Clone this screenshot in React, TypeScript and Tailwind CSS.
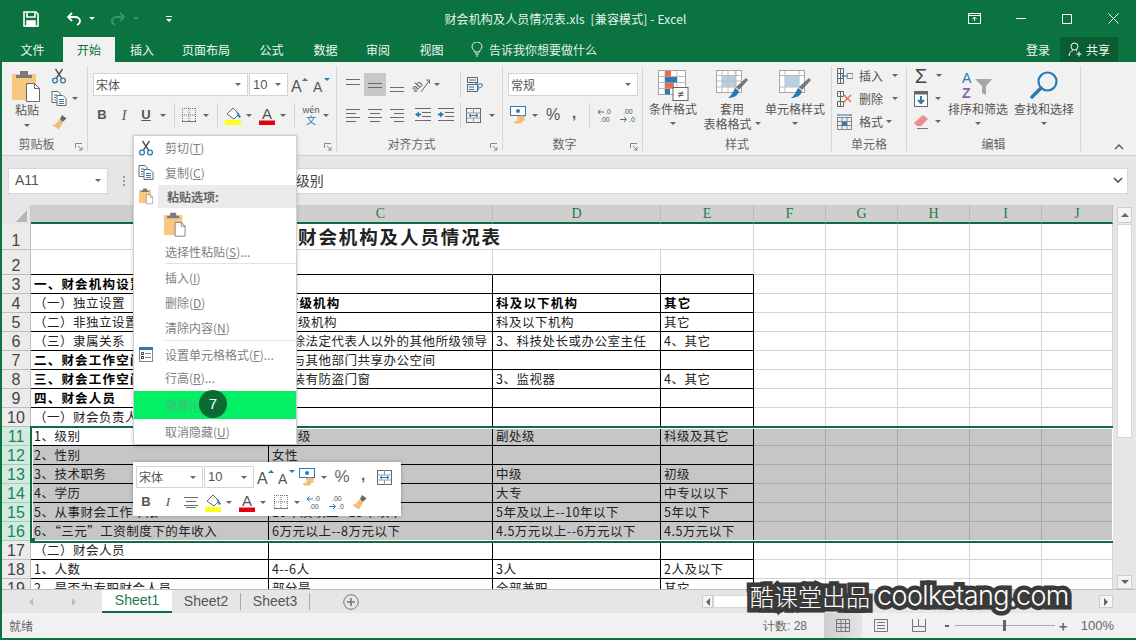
import React from "react";

const UI = "font-['Noto_Sans_CJK_SC','Noto_Sans',sans-serif]";
const Caret = ({ c = "border-t-[#666]" }: { c?: string }) => (
  <span className={`inline-block w-0 h-0 border-x-[3px] border-x-transparent border-t-[3px] ${c}`} />
);
const Slot = ({ c, children }: { c: string; children?: React.ReactNode }) => (
  <div className={`flex items-center justify-center shrink-0 ${c}`}>{children}</div>
);
const Sep = ({ c = "h-[24px]" }: { c?: string }) => <div className={`w-px bg-[#d2d2d2] ${c}`} />;

const G = "#666";
const B = "#2a7ab5";

const Save = () => (
  <svg width="16" height="16" viewBox="0 0 16 16" fill="none" stroke="#fff" strokeWidth="1.6">
    <path d="M1 1h12l2 2v12H1z" />
    <path d="M4 1v5h8V1" />
    <rect x="4" y="10" width="8" height="5" fill="#fff" />
  </svg>
);
const Undo = ({ c = "#fff" }: { c?: string }) => (
  <svg width="16" height="14" viewBox="0 0 16 14" fill="none" stroke={c} strokeWidth="1.8">
    <path d="M6 1L2 5l4 4" />
    <path d="M2 5h7c3 0 5 2 5 4s-1 3-3 4" />
  </svg>
);
const Redo = ({ c }: { c: string }) => (
  <svg width="16" height="14" viewBox="0 0 16 14" fill="none" stroke={c} strokeWidth="1.8">
    <path d="M10 1l4 4-4 4" />
    <path d="M14 5H7C4 5 2 7 2 9s1 3 3 4" />
  </svg>
);
const PasteIcon = ({ s = 30 }: { s?: number }) => (
  <svg width={s} height={s * 1.07} viewBox="0 0 30 32">
    <rect x="0" y="4" width="24" height="26" fill="#f8c880" />
    <path d="M8 5V1h8v4h4v3H4V5z" fill="#7b7b7b" />
    <path d="M14.5 13.5h8l5 5v13h-13z" fill="#fff" stroke="#666" />
    <path d="M22.5 13.5v5h5" fill="none" stroke="#666" />
  </svg>
);
const Cut = () => (
  <svg width="16" height="16" viewBox="0 0 16 16" fill="none">
    <path d="M4.5 1l6 9M11.5 1l-6 9" stroke="#555" strokeWidth="1.4" />
    <circle cx="4" cy="12.5" r="2.4" stroke={B} strokeWidth="1.3" />
    <circle cx="12" cy="12.5" r="2.4" stroke={B} strokeWidth="1.3" />
  </svg>
);
const Copy = () => (
  <svg width="16" height="15" viewBox="0 0 16 15" fill="none">
    <path d="M1 .5h6l2 2v9H1z" fill="#fff" stroke="#666" />
    <path d="M6 4.500h6l3 3v7H6z" fill="#fff" stroke="#666" />
    <path d="M3 4h3M3 6.500h2M3 9h2M8 8.500h5M8 10.500h5M8 12.500h5" stroke={B} />
  </svg>
);
const Painter = () => (
  <svg width="17" height="16" viewBox="0 0 17 16">
    <path d="M11 1l4.500 3.500-4 3.500L9 5z" fill={G} />
    <path d="M8.500 5l3.500 3.500-4 7L1 11c3 0 6-3 7.500-6z" fill="#f4bd73" />
  </svg>
);
const AUp = ({ big, down }: { big?: boolean; down?: boolean }) => (
  <svg width="20" height="20" viewBox="0 0 20 20" className="overflow-visible">
    <text x="1" y="17" fontFamily="Liberation Sans" fontSize={big ? 16 : 14} fill="#555">A</text>
    <path d={down ? "M12 3h6l-3 3z" : "M12 6h6l-3-3z"} fill={B} />
  </svg>
);
const Bars = ({ ys, x }: { ys: number[]; x: [number, number][] }) => (
  <svg width="16" height="16" viewBox="0 0 16 16" stroke="#6a6a6a">
    {ys.map((y, i) => (
      <path key={i} d={`M${x[i % x.length][0]} ${y}.5H${x[i % x.length][1]}`} />
    ))}
  </svg>
);
const Borders = () => (
  <svg width="14" height="14" viewBox="0 0 14 14" stroke="#777" strokeDasharray="1 1">
    <path d="M.5 0v14M7 0v14M13.500 0v14M0 .5h14M0 7h14" />
    <path d="M0 13.500h14" strokeDasharray="none" />
  </svg>
);
const FillC = () => (
  <svg width="18" height="19" viewBox="0 0 18 19">
    <path d="M3 8l6-6 6 6-5 5z" fill="#fff" stroke="#666" />
    <path d="M12 5l3 3 2 3-2 1z" fill={B} />
    <rect x="1" y="14" width="16" height="5" fill="#ffff1e" />
  </svg>
);
const FontC = () => (
  <svg width="17" height="19" viewBox="0 0 17 19" className="overflow-visible">
    <text x="3" y="13" fontFamily="Liberation Sans" fontSize="15" fill="#555">A</text>
    <rect x="0" y="14.500" width="16" height="4.500" fill="#e60012" />
  </svg>
);
const Indent = ({ rev }: { rev?: boolean }) => (
  <svg width="17" height="14" viewBox="0 0 17 14">
    <path d="M1 .5h16M8 4.500h9M8 8.500h9M1 12.500h16" stroke="#6a6a6a" />
    <path d={rev ? "M1 6.500l4-3v2h2v2H5v2z" : "M7 6.500l-4-3v2H1v2h2v2z"} fill={B} />
  </svg>
);
const Merge = () => (
  <svg width="16" height="15" viewBox="0 0 16 15" fill="none">
    <rect x=".5" y=".5" width="14" height="14" stroke="#666" />
    <path d="M.5 5h14M.5 10h14M7.500 0v5M7.500 10v5" stroke="#999" />
    <path d="M3 7.500h9M3 7.500l2-1.500M3 7.500l2 1.500M12 7.500l-2-1.500M12 7.500l-2 1.500" stroke={B} />
  </svg>
);
const Wrap = () => (
  <svg width="17" height="15" viewBox="0 0 17 15" fill="none">
    <rect x=".5" y=".5" width="10" height="5" stroke="#666" />
    <rect x=".5" y="7.500" width="10" height="7" stroke="#666" />
    <path d="M2 3h7M2 10h5M2 12.500h5" stroke={B} />
    <path d="M8 7h7c1 3-1 4-4 4M12 9l-2 2 2 2" stroke={B} />
  </svg>
);
const Orient = () => (
  <svg width="18" height="16" viewBox="0 0 18 16" className="overflow-visible">
    <text x="0" y="14" fontFamily="Liberation Sans" fontSize="10" fill="#555" transform="rotate(-45 3 12)">ab</text>
    <path d="M8 15L16 4M13 3h3.500v3.500" stroke="#666" fill="none" />
  </svg>
);
const Currency = () => (
  <svg width="17" height="18" viewBox="0 0 17 18">
    <rect x=".5" y=".5" width="15" height="9" fill="#fff" stroke={B} />
    <circle cx="8" cy="5" r="2" fill={B} />
    <ellipse cx="11" cy="11" rx="4" ry="1.500" fill="#f4bd73" />
    <ellipse cx="11" cy="13.500" rx="4" ry="1.500" fill="#f4bd73" />
    <ellipse cx="8" cy="16" rx="4" ry="1.500" fill="#f4bd73" />
  </svg>
);
const Dec = ({ inc }: { inc?: boolean }) => (
  <svg width="18" height="15" viewBox="0 0 18 15" className="overflow-visible">
    <text x={inc ? 4 : 9} y="6" fontFamily="Liberation Sans" fontSize="7" fill="#555">{inc ? ".00" : ".0"}</text>
    <text x={inc ? 10 : 4} y="14" fontFamily="Liberation Sans" fontSize="7" fill="#555">{inc ? ".0" : ".00"}</text>
    {inc ? (
      <path d="M1 11.500h6M5 9l2.500 2.500L5 14" stroke={B} fill="none" />
    ) : (
      <path d="M8 4H2M4.500 1.500L2 4l2.500 2.500" stroke={B} fill="none" />
    )}
  </svg>
);
const CondF = () => (
  <svg width="31" height="31" viewBox="0 0 31 31" className="overflow-visible">
    <rect x=".5" y=".5" width="27" height="24" fill="#fff" stroke="#a6a6a6" />
    <path d="M7 .5v24M19 .5v24M.5 6.500h27M.5 12.500h27M.5 18.500h27" stroke="#bbb" />
    <rect x="7" y="1" width="6" height="5.500" fill="#ef6a4a" />
    <rect x="7" y="7" width="12" height="5.500" fill="#2a7ab5" />
    <rect x="7" y="13" width="9" height="5.500" fill="#ef6a4a" />
    <rect x="7" y="19" width="5" height="5.500" fill="#2a7ab5" />
    <rect x="15" y="17.500" width="15" height="13" fill="#fff" stroke="#666" />
    <text x="22.500" y="28" textAnchor="middle" fontSize="11" fontFamily="Liberation Sans" fill="#444">≠</text>
  </svg>
);
const TableF = ({ wide }: { wide?: boolean }) => (
  <svg width="32" height="30" viewBox="0 0 32 30">
    <rect x=".5" y=".5" width="25" height="22" fill="#fff" stroke="#a6a6a6" />
    <path d="M.5 5.500h25M.5 17h25M6 .5v22M20 .5v22" stroke="#bbb" />
    <rect x="6" y="6" width="14" height="11" fill="#b7cfe3" />
    {!wide && <path d="M12 .5v22M19 .5v22M.5 11h25" stroke="#bbb" />}
    <path d="M30 8l2 2-9 10-3-3z" fill="#777" />
    <path d="M19 18l4 3c-1 5-6 7-11 7 3-2 5-6 7-10z" fill={B} />
  </svg>
);
const InsCell = () => (
  <svg width="16" height="16" viewBox="0 0 16 16" fill="none" stroke="#666">
    <path d="M.5 .5h6v5h-6zM.5 10.500h6v5h-6zM.5 5.500h6v5h-6zM3.500 .5v15" />
    <path d="M10 5.500h6v5h-6z" stroke="#888" />
    <path d="M11 8H5M7 6L5 8l2 2" stroke={B} />
  </svg>
);
const DelCell = () => (
  <svg width="16" height="16" viewBox="0 0 16 16" fill="none" stroke="#666">
    <path d="M.5 .5h6v5h-6zM.5 10.500h6v5h-6zM3.500 .5v15" />
    <path d="M7 4l7 7M14 4l-7 7" stroke="#ef6a4a" strokeWidth="1.4" />
  </svg>
);
const FmtCell = () => (
  <svg width="16" height="16" viewBox="0 0 16 16" fill="none" stroke="#888">
    <rect x=".5" y="3.500" width="14" height="12" />
    <path d="M.5 7.500h14M.5 11.500h14M5 3.500v12M10 3.500v12" />
    <rect x="5" y="8" width="5" height="4" fill={B} stroke="none" />
    <path d="M1 1h13M1 0v2M14 0v2" stroke={B} />
  </svg>
);
const FillDn = () => (
  <svg width="15" height="16" viewBox="0 0 15 16">
    <rect x=".5" y=".5" width="13" height="15" fill="#fff" stroke="#666" />
    <rect x="0" y="0" width="14" height="3.500" fill="#666" />
    <path d="M7 5v7M4 9l3 3 3-3" stroke={B} strokeWidth="2" fill="none" />
  </svg>
);
const Eraser = () => (
  <svg width="15" height="14" viewBox="0 0 15 14">
    <path d="M9 0l5 4-7 7H3L0 8z" fill="#f08a92" />
    <path d="M3 13.500h11" stroke="#777" />
  </svg>
);
const Sort = () => (
  <svg width="32" height="28" viewBox="0 0 32 28" className="overflow-visible">
    <text x="0" y="12" fontFamily="Liberation Sans" fontSize="14" fill={B}>A</text>
    <text x="0" y="27" fontFamily="Liberation Sans" fontSize="14" fontWeight="bold" fill="#8e5fae">Z</text>
    <path d="M13 8h17l-6 7v9l-4-2v-7z" fill="#a6a6a6" />
  </svg>
);
const Search = () => (
  <svg width="28" height="28" viewBox="0 0 28 28" fill="none">
    <circle cx="17.500" cy="10.500" r="9" stroke={B} strokeWidth="2.200" />
    <path d="M11 17L2 26" stroke={B} strokeWidth="3.500" strokeLinecap="round" />
  </svg>
);
const FmtMenu = () => (
  <svg width="15" height="15" viewBox="0 0 15 15" fill="none">
    <rect x=".5" y=".5" width="13" height="14" stroke="#888" />
    <rect x="0" y="0" width="14" height="3" fill={B} />
    <path d="M6 6.500h6M6 10.500h6" stroke="#888" />
    <rect x="2.500" y="5.500" width="2" height="2" stroke="#555" />
    <rect x="2.500" y="9.500" width="2" height="2" stroke="#555" />
  </svg>
);

const Launcher = () => (
  <svg width="8" height="8" viewBox="0 0 8 8" fill="none" stroke="#888">
    <path d="M.5 5V.5H7" />
    <path d="M3 3l4 4M7 4v3H4" />
  </svg>
);

const Group = ({ c, label, launcher, children }: { c: string; label: string; launcher?: boolean; children: React.ReactNode }) => (
  <div className={`shrink-0 flex flex-col border-r border-[#d6d6d6] ${c}`}>
    <div className="h-[72px]">{children}</div>
    <div className="h-[14px] flex items-center">
      <span className="flex-1 text-center text-[12px] leading-[14px] text-[#666]">{label}</span>
      {launcher && (
        <span className="w-[16px] flex justify-center pt-[5px]">
          <Launcher />
        </span>
      )}
    </div>
  </div>
);

const Big = ({ c, icon, lines }: { c: string; icon: React.ReactNode; lines: string[] }) => (
  <div className={`flex flex-col items-center shrink-0 ${c}`}>
    <div className="h-[35px] flex items-center justify-center pt-[3px]">{icon}</div>
    <div className="h-[15px] text-[12px] leading-[15px] text-[#555] whitespace-nowrap">{lines[0]}</div>
    <div className="h-[15px] text-[12px] leading-[15px] text-[#555] whitespace-nowrap flex items-center gap-[3px]">
      {lines[1]}
      <Caret />
    </div>
  </div>
);

const SelectBox = ({ c, text, mono }: { c: string; text: string; mono?: boolean }) => (
  <div className={`flex items-center justify-between bg-white border border-[#d4d4d4] shrink-0 h-[23px] pl-[2px] pr-[6px] text-[12px] text-[#555] ${c}`}>
    <span className={mono ? "text-[13px] font-['Liberation_Sans'] pl-[1px]" : ""}>{text}</span>
    <Caret />
  </div>
);

const TabItem = ({ c, t, active }: { c: string; t: string; active?: boolean }) => (
  <div className={`flex items-center justify-center text-[12px] shrink-0 ${c} ${active ? "bg-[#f1f1f1] text-[#0a7340]" : "text-[#eef7f2]"}`}>{t}</div>
);

const MenuItem = ({ c = "h-[25px] shrink-0", icon, children }: { c?: string; icon?: React.ReactNode; children?: React.ReactNode }) => (
  <div className={`flex items-center ${c}`}>
    <div className="w-[24px] flex justify-center shrink-0">{icon}</div>
    <div className="pl-[7px] text-[12px] text-[#7f7f7f] whitespace-nowrap">{children}</div>
  </div>
);
const MenuSep = () => <div className="h-px bg-[#e2e2e2] ml-[31px] shrink-0" />;

type R = { n: number; h: string; a?: string; c?: string; d?: string; e?: string; ab?: boolean; cb?: boolean };
const rows: R[] = [
  { n: 2, h: "h-[25px]" },
  { n: 3, h: "h-[19px]", a: "一、财会机构设置", ab: true },
  { n: 4, h: "h-[19px]", a: "（一）独立设置", c: "地市级机构", d: "科及以下机构", e: "其它", cb: true },
  { n: 5, h: "h-[19px]", a: "（二）非独立设置", c: "地市级机构", d: "科及以下机构", e: "其它" },
  { n: 6, h: "h-[19px]", a: "（三）隶属关系", c: "1、除法定代表人以外的其他所级领导", d: "3、科技处长或办公室主任", e: "4、其它" },
  { n: 7, h: "h-[19px]", a: "二、财会工作空间", ab: true, c: "1、与其他部门共享办公空间" },
  { n: 8, h: "h-[19px]", a: "三、财会工作空间", ab: true, c: "1、装有防盗门窗", d: "3、监视器", e: "4、其它" },
  { n: 9, h: "h-[19px]", a: "四、财会人员", ab: true },
  { n: 10, h: "h-[19px]", a: "（一）财会负责人" },
  { n: 11, h: "h-[19px]", a: "1、级别", c: "正处级", d: "副处级", e: "科级及其它" },
  { n: 12, h: "h-[19px]", a: "2、性别", c: "女性" },
  { n: 13, h: "h-[19px]", a: "3、技术职务", c: "高级", d: "中级", e: "初级" },
  { n: 14, h: "h-[19px]", a: "4、学历", c: "本科及以上", d: "大专", e: "中专以以下" },
  { n: 15, h: "h-[19px]", a: "5、从事财会工作年限", c: "10年及以上--15年以下", d: "5年及以上--10年以下", e: "5年以下" },
  { n: 16, h: "h-[19px]", a: "6、“三元”工资制度下的年收入", c: "6万元以上--8万元以下", d: "4.5万元以上--6万元以下", e: "4.5万元以下" },
  { n: 17, h: "h-[19px]", a: "（二）财会人员" },
  { n: 18, h: "h-[19px]", a: "1、人数", c: "4--6人", d: "3人", e: "2人及以下" },
  { n: 19, h: "h-[19px]", a: "2、是否为专职财会人员", c: "部分是", d: "全部兼职", e: "其它" },
];
const GRID = "grid grid-cols-[29px_238px_224px_168px_93px_72px_72px_72px_72px_71px]";
const songti = "text-[12.5px] text-[#222] whitespace-nowrap overflow-hidden flex items-center";

const RowHead = ({ n, sel, h }: { n: number; sel?: boolean; h: string }) => (
  <div className={`${h} flex items-end justify-center border-r border-b font-['Liberation_Sans'] text-[16px] leading-[17px] ${sel ? "bg-[#d3ebde] text-[#16855a] border-[#a9cdb9]" : "bg-[#ebebeb] text-[#444] border-[#bdbdbd]"}`}>{n}</div>
);

const Row = ({ r }: { r: R }) => {
  const sel = r.n >= 11 && r.n <= 16;
  const v = r.n >= 3 ? "border-r-black" : "border-r-[#d4d4d4]";
  const bg = sel ? "bg-[#c6c6c6]" : "bg-white";
  const base = `${songti} ${r.h} pl-[3px] border-r border-b border-b-black ${v}`;
  const reg = "tracking-[0.5px]";
  const bold = "font-bold tracking-[1.2px] text-black";
  return (
    <div className={GRID}>
      <RowHead n={r.n} sel={sel} h={r.h} />
      <div className={`${base} ${r.n === 11 ? "bg-white" : bg} ${r.ab ? bold : reg}`}>{r.a}</div>
      <div className={`${base} ${bg} ${r.cb ? bold : reg}`}>{r.c}</div>
      <div className={`${base} ${bg} ${r.cb ? bold : reg}`}>{r.d}</div>
      <div className={`${base} ${bg} ${r.cb ? bold : reg}`}>{r.e}</div>
      {[0, 1, 2, 3, 4].map((i) => (
        <div key={i} className={`${r.h} border-r border-b ${sel ? "bg-[#c6c6c6] border-[#a8a8a8]" : "bg-white border-[#d4d4d4]"}`} />
      ))}
    </div>
  );
};

const Mini = () => (
  <div className="absolute left-[133px] top-[462px] w-[268px] h-[54px] bg-white shadow-[0_0_4px_rgba(0,0,0,0.25)] z-20 pl-[3px] pt-[4px]">
    <div className="flex items-center h-[22px]">
      <SelectBox c="w-[67px] !h-[22px] border-[#c8c8c8]" text="宋体" />
      <SelectBox c="w-[50px] !h-[22px] border-[#c8c8c8] ml-[1px]" text="10" mono />
      <Slot c="w-[22px] ml-[1px]"><AUp big /></Slot>
      <Slot c="w-[20px]"><AUp down /></Slot>
      <Slot c="w-[20px]"><Currency /></Slot>
      <Slot c="w-[8px] ml-[3px]"><Caret /></Slot>
      <Slot c="w-[24px] ml-[2px] text-[17px] text-[#666] font-['Liberation_Sans']">%</Slot>
      <Slot c="w-[18px] text-[15px] font-bold text-[#666] font-['Liberation_Sans'] pb-[3px]">,</Slot>
      <Slot c="w-[26px]"><Merge /></Slot>
    </div>
    <div className="flex items-center h-[24px] mt-[2px] pl-[2px]">
      <Slot c="w-[16px] text-[13px] font-bold text-[#555] font-['Liberation_Sans']">B</Slot>
      <Slot c="w-[28px] text-[13px] italic text-[#555] font-['Liberation_Serif']">I</Slot>
      <Slot c="w-[18px]"><Bars ys={[3, 7, 11, 13]} x={[[1, 15], [3, 13], [1, 15], [3, 13]]} /></Slot>
      <Slot c="w-[26px]"><FillC /></Slot>
      <Slot c="w-[6px]"><Caret /></Slot>
      <Slot c="w-[26px] ml-[2px]"><FontC /></Slot>
      <Slot c="w-[6px]"><Caret /></Slot>
      <Slot c="w-[26px] ml-[2px]"><Borders /></Slot>
      <Slot c="w-[6px]"><Caret /></Slot>
      <Slot c="w-[28px]"><Dec /></Slot>
      <Slot c="w-[18px]"><Dec inc /></Slot>
      <Slot c="w-[26px]"><Painter /></Slot>
    </div>
  </div>
);

const Menu = () => (
  <div className="absolute left-[133px] top-[135px] w-[164px] h-[310px] bg-white border border-[#d0d0d0] shadow-[0_1px_4px_rgba(0,0,0,0.2)] z-20 flex flex-col">
    <MenuItem c="h-[24px] shrink-0" icon={<Cut />}>剪切(<u>T</u>)</MenuItem>
    <MenuItem icon={<Copy />}>复制(<u>C</u>)</MenuItem>
    <div className="flex items-center h-[23px] shrink-0">
      <div className="w-[24px] flex justify-center"><PasteIcon s={15} /></div>
      <div className="flex-1 h-full bg-[#ebebeb] flex items-center pl-[9px] text-[12px] font-bold text-[#666]">粘贴选项:</div>
    </div>
    <div className="h-[33px] pl-[30px] pt-[4px] shrink-0"><PasteIcon s={23} /></div>
    <MenuItem c="h-[22px] shrink-0">选择性粘贴(<u>S</u>)...</MenuItem>
    <MenuSep />
    <MenuItem c="h-[25px] shrink-0 mt-[1px]">插入(<u>I</u>)</MenuItem>
    <MenuItem>删除(<u>D</u>)</MenuItem>
    <MenuItem>清除内容(<u>N</u>)</MenuItem>
    <MenuSep />
    <MenuItem c="h-[25px] shrink-0 mt-[1px]" icon={<FmtMenu />}>设置单元格格式(<u>F</u>)...</MenuItem>
    <MenuItem c="h-[24px] shrink-0 pb-[2px]">行高(<u>R</u>)...</MenuItem>
    <div className="h-[28px] bg-[#03ef66] flex items-center shrink-0 relative">
      <div className="w-[24px]" />
      <div className="pl-[7px] text-[12px] text-[#3fbf76]">隐藏(<u>H</u>)</div>
      <div className="absolute left-[65px] top-[-1px] w-[28px] h-[28px] rounded-full bg-[#0b6b35] text-white text-[15px] font-['Liberation_Sans'] flex items-center justify-center">7</div>
    </div>
    <MenuItem c="flex-1">取消隐藏(<u>U</u>)</MenuItem>
  </div>
);

const WinBtn = ({ children }: { children: React.ReactNode }) => <Slot c="w-[46px] h-[37px]">{children}</Slot>;

export default function App() {
  return (
    <div className={`relative w-[1136px] h-[640px] overflow-hidden flex flex-col bg-[#0a7340] pl-[2px] pb-[2px] ${UI}`}>
      {/* Title bar */}
      <div className="grid grid-cols-[1fr_auto_1fr] h-[37px] shrink-0 items-center text-white">
        <div className="flex items-center pl-[19px]">
          <Slot c="w-[20px]"><Save /></Slot>
          <Slot c="w-[20px] ml-[23px]"><Undo /></Slot>
          <Slot c="w-[10px] ml-[3px]"><Caret c="border-t-white" /></Slot>
          <Slot c="w-[20px] ml-[11px]"><Redo c="#2f9a68" /></Slot>
          <Slot c="w-[10px] ml-[3px]"><Caret c="border-t-[#2f9a68]" /></Slot>
          <Slot c="w-[10px] ml-[23px]">
            <svg width="8" height="8" viewBox="0 0 8 8" fill="#fff"><path d="M1 1h6v1H1zM1 4h6L4 7z" /></svg>
          </Slot>
        </div>
        <div className="text-[12px] text-[#e8f3ed] whitespace-pre tracking-[0.15px] pr-[7px]">财会机构及人员情况表.xls  [兼容模式] - Excel</div>
        <div className="flex justify-end">
          <WinBtn>
            <svg width="14" height="11" viewBox="0 0 14 11" fill="none" stroke="#fff"><rect x=".5" y=".5" width="12" height="10" /><path d="M.5 2.500h12M6.500 8V4M4.500 6l2-2 2 2" /></svg>
          </WinBtn>
          <WinBtn><div className="w-[10px] h-px bg-white" /></WinBtn>
          <WinBtn><div className="w-[10px] h-[10px] border border-white" /></WinBtn>
          <WinBtn>
            <svg width="11" height="11" viewBox="0 0 11 11" stroke="#fff"><path d="M.5 .5l10 10M10.500 .5l-10 10" /></svg>
          </WinBtn>
        </div>
      </div>
      {/* Tabs */}
      <div className="flex h-[25px] shrink-0">
        <TabItem c="w-[61px]" t="文件" />
        <TabItem c="w-[52px]" t="开始" active />
        <TabItem c="w-[54px]" t="插入" />
        <TabItem c="w-[74px]" t="页面布局" />
        <TabItem c="w-[57px]" t="公式" />
        <TabItem c="w-[51px]" t="数据" />
        <TabItem c="w-[54px]" t="审阅" />
        <TabItem c="w-[53px]" t="视图" />
        <div className="flex items-center pl-[13px] gap-[6px] text-[12px] text-[#e2f0e9]">
          <svg width="12" height="15" viewBox="0 0 12 15" fill="none" stroke="#eef7f2"><path d="M3.500 10c0-2-2.500-3-2.500-5.500a5 4.500 0 0 1 10 0C11 7 8.500 8 8.500 10zM4 12h4M5 14h2" /></svg>
          告诉我你想要做什么
        </div>
        <div className="flex-1" />
        <div className="flex items-center text-[12px] text-[#eef7f2] pr-[10px]">登录</div>
        <div className="w-[58px] mr-[18px] h-[25px] bg-[#0a5c33] flex items-center justify-center gap-[3px] text-[12px] text-[#eef7f2]">
          <svg width="15" height="15" viewBox="0 0 15 15" fill="none" stroke="#fff"><circle cx="6.500" cy="4.500" r="3.500" /><path d="M1 14c0-3 2-5 4-5.500M8 8.500l1 .5M11 9.500v5M8.500 12h5" /></svg>
          共享
        </div>
      </div>
      {/* Ribbon */}
      <div className="flex h-[94px] shrink-0 bg-[#f1f1f1] py-[4px] border-b border-[#d0d0d0] text-[#555]">
        <Group c="w-[86px]" label="剪贴板" launcher>
          <div className="flex">
            <div className="w-[44px] ml-[3px] flex flex-col items-center">
              <div className="h-[36px] pt-[4px]"><PasteIcon /></div>
              <div className="h-[16px] text-[12px] leading-[16px]">粘贴</div>
              <div className="h-[14px] flex items-center"><Caret /></div>
            </div>
            <div className="flex flex-col -mt-[2px]">
              <div className="flex items-center h-[23px]"><Slot c="w-[20px]"><Cut /></Slot></div>
              <div className="flex items-center h-[23px]"><Slot c="w-[20px]"><Copy /></Slot><Slot c="w-[12px]"><Caret /></Slot></div>
              <div className="flex items-center h-[23px]"><Slot c="w-[20px]"><Painter /></Slot></div>
            </div>
          </div>
        </Group>
        <Group c="w-[249px]" label="字体" launcher>
          <div className="pt-[7px] pl-[5px] flex items-center">
            <SelectBox c="w-[155px]" text="宋体" />
            <SelectBox c="w-[39px] ml-[1px]" text="10" mono />
            <Slot c="w-[22px] ml-[1px]"><AUp big /></Slot>
            <Slot c="w-[22px]"><AUp down /></Slot>
          </div>
          <div className="flex items-center h-[24px] mt-[7px] pl-[3px]">
            <Slot c="w-[22px] text-[13px] font-bold font-['Liberation_Sans']">B</Slot>
            <Slot c="w-[22px] text-[14px] italic font-['Liberation_Serif']">I</Slot>
            <Slot c="w-[22px] text-[13px] font-bold underline font-['Liberation_Sans']">U</Slot>
            <Slot c="w-[12px]"><Caret /></Slot>
            <Slot c="w-[10px]"><Sep /></Slot>
            <Slot c="w-[20px]"><Borders /></Slot>
            <Slot c="w-[13px]"><Caret /></Slot>
            <Slot c="w-[10px]"><Sep /></Slot>
            <Slot c="w-[22px]"><FillC /></Slot>
            <Slot c="w-[10px]"><Caret /></Slot>
            <Slot c="w-[24px] ml-[1px]"><FontC /></Slot>
            <Slot c="w-[8px]"><Caret /></Slot>
            <Slot c="w-[10px] ml-[2px]"><Sep /></Slot>
            <Slot c="w-[24px] flex-col leading-[10px] text-[9px]">
              <span>wén</span>
              <span className="text-[#2a7ab5] text-[10px]">文</span>
            </Slot>
            <Slot c="w-[6px]"><Caret /></Slot>
          </div>
        </Group>
        <Group c="w-[166px]" label="对齐方式" launcher>
          <div className="pt-[7px] pl-[5px] flex items-center h-[30px]">
            <Slot c="w-[22px] h-[23px]"><Bars ys={[2, 7]} x={[[1, 15]]} /></Slot>
            <Slot c="w-[22px] h-[23px] bg-[#c8c8c8]"><Bars ys={[6, 10]} x={[[1, 15]]} /></Slot>
            <Slot c="w-[22px] h-[23px]"><Bars ys={[10, 14]} x={[[1, 15]]} /></Slot>
            <Slot c="w-[24px] ml-[2px]"><Orient /></Slot>
            <Slot c="w-[6px]"><Caret /></Slot>
            <Slot c="w-[20px]" />
            <Sep />
            <Slot c="w-[24px] ml-[2px]"><Wrap /></Slot>
          </div>
          <div className="flex items-center h-[24px] mt-[7px] pl-[5px]">
            <Slot c="w-[22px]"><Bars ys={[2, 6, 10, 14]} x={[[1, 15], [1, 11]]} /></Slot>
            <Slot c="w-[22px]"><Bars ys={[2, 6, 10, 14]} x={[[1, 15], [3, 13]]} /></Slot>
            <Slot c="w-[22px]"><Bars ys={[2, 6, 10, 14]} x={[[1, 15], [5, 15]]} /></Slot>
            <Slot c="w-[24px] ml-[2px]"><Indent rev /></Slot>
            <Slot c="w-[22px]"><Indent /></Slot>
            <Slot c="w-[4px]" />
            <Sep />
            <Slot c="w-[24px] ml-[1px]"><Merge /></Slot>
            <Slot c="w-[8px] ml-[2px]"><Caret /></Slot>
          </div>
        </Group>
        <Group c="w-[140px]" label="数字" launcher>
          <div className="pt-[7px] pl-[5px] flex items-center">
            <SelectBox c="w-[130px]" text="常规" />
          </div>
          <div className="flex items-center h-[24px] mt-[7px] pl-[5px]">
            <Slot c="w-[20px]"><Currency /></Slot>
            <Slot c="w-[8px] ml-[3px]"><Caret /></Slot>
            <Slot c="w-[22px] ml-[3px] text-[16px] font-['Liberation_Sans']">%</Slot>
            <Slot c="w-[20px] text-[15px] font-bold font-['Liberation_Sans'] pb-[4px]">,</Slot>
            <Slot c="w-[11px]"><Sep /></Slot>
            <Slot c="w-[20px]"><Dec /></Slot>
            <Slot c="w-[22px] ml-[2px]"><Dec inc /></Slot>
          </div>
        </Group>
        <Group c="w-[189px]" label="样式">
          <div className="flex pl-[1px]">
            <Big c="w-[58px]" icon={<CondF />} lines={["条件格式", ""]} />
            <Big c="w-[60px]" icon={<TableF />} lines={["套用", "表格格式"]} />
            <Big c="w-[60px] ml-[3px]" icon={<TableF wide />} lines={["单元格样式", ""]} />
          </div>
        </Group>
        <Group c="w-[75px]" label="单元格">
          <div className="-mt-[2px]">
            {[
              { i: <InsCell />, t: "插入", g: "ml-[9px]" },
              { i: <DelCell />, t: "删除", g: "ml-[9px]" },
              { i: <FmtCell />, t: "格式", g: "ml-[3px]" },
            ].map((x) => (
              <div key={x.t} className="flex items-center h-[23px] text-[12px]">
                <Slot c="w-[25px]">{x.i}</Slot>
                <span className="pl-[2px]">{x.t}</span>
                <span className={`flex ${x.g}`}><Caret /></span>
              </div>
            ))}
          </div>
        </Group>
        <Group c="w-[174px]" label="编辑">
          <div className="flex">
            <div className="flex flex-col w-[38px] shrink-0 -mt-[2px]">
              <div className="flex items-center h-[23px]">
                <Slot c="w-[28px] text-[20px] text-[#444] font-['Liberation_Sans'] leading-[20px]">Σ</Slot>
                <Slot c="w-[8px]"><Caret /></Slot>
              </div>
              <div className="flex items-center h-[23px]">
                <Slot c="w-[28px]"><FillDn /></Slot>
                <Slot c="w-[6px]"><Caret /></Slot>
              </div>
              <div className="flex items-center h-[23px]">
                <Slot c="w-[28px]"><Eraser /></Slot>
                <Slot c="w-[6px]"><Caret /></Slot>
              </div>
            </div>
            <Big c="w-[66px]" icon={<Sort />} lines={["排序和筛选", ""]} />
            <Big c="w-[66px]" icon={<Search />} lines={["查找和选择", ""]} />
          </div>
        </Group>
        <div className="flex-1 flex items-end justify-end pr-[12px] pb-[1px]">
          <svg width="10" height="6" viewBox="0 0 10 6" fill="none" stroke="#555" strokeWidth="1.4"><path d="M1 5l4-4 4 4" /></svg>
        </div>
      </div>
      {/* Formula bar */}
      <div className="flex items-center h-[49px] shrink-0 bg-[#e6e6e6] pl-[6px] pr-[8px]">
        <div className="w-[100px] h-[26px] bg-white border border-[#d8d8d8] flex items-center justify-between pl-[6px] pr-[6px] text-[14px] font-['Liberation_Sans'] text-[#555]">
          A11
          <Caret />
        </div>
        <div className="w-[32px] flex flex-col items-center gap-[2px]">
          <span className="w-[2px] h-[2px] bg-[#999]" />
          <span className="w-[2px] h-[2px] bg-[#999]" />
          <span className="w-[2px] h-[2px] bg-[#999]" />
        </div>
        <div className="flex-1 h-[26px] bg-white border border-[#d8d8d8] flex items-center justify-between pl-[133px] pr-[4px] text-[14px] text-[#444]">
          1、级别
          <svg width="10" height="7" viewBox="0 0 10 7" fill="none" stroke="#555" strokeWidth="1.6"><path d="M1 1l4 4 4-4" /></svg>
        </div>
      </div>
      {/* Sheet */}
      <div className="relative flex h-[384px] shrink-0 overflow-hidden bg-white">
        <div className="w-[1111px] shrink-0 relative overflow-hidden">
          <div className={GRID}>
            <div className="h-[19px] bg-[#e6e6e6] border-r border-[#c8c8c8] flex items-end justify-end pr-[3px] pb-[2px]">
              <span className="w-0 h-0 border-b-[12px] border-l-[11px] border-l-transparent border-b-[#b5b5b5]" />
            </div>
            {["", "C", "D", "E", "F", "G", "H", "I", "J"].map((l) => (
              <div key={l} className="h-[19px] bg-[#cfcfcf] border-r border-r-[#bdbdbd] border-b-2 border-b-[#0f6b42] flex items-center justify-center font-['Liberation_Serif'] text-[14px] text-[#1f7a4d]">{l}</div>
            ))}
          </div>
          <div className={GRID}>
            <RowHead n={1} h="h-[26px]" />
            <div className="col-span-4 h-[26px] bg-white border-r border-b border-[#d4d4d4] flex items-center pl-[267px] text-[18.5px] font-bold tracking-[1.9px] text-[#222] whitespace-nowrap overflow-hidden">财会机构及人员情况表</div>
            {[0, 1, 2, 3, 4].map((i) => (
              <div key={i} className="h-[26px] border-r border-b border-[#d4d4d4] bg-white" />
            ))}
          </div>
          {rows.map((r) => (
            <Row key={r.n} r={r} />
          ))}
          <div className="absolute left-[28px] top-[221px] w-[1083px] h-[117px] border-y-2 border-l-2 border-[#0f6b42] shadow-[inset_0_0_0_1px_#fff] pointer-events-none" />
          <div className="absolute left-[28px] top-[333px] w-[5px] h-[5px] bg-[#0f6b42] pointer-events-none" />
        </div>
        <div className="flex-1 bg-[#e6e6e6] flex flex-col pl-[4px] pr-[4px] pt-[2px]">
          <div className="h-[16px] bg-[#f4f4f4] border border-[#cfcfcf] flex items-center justify-center"><span className="w-0 h-0 border-x-[4px] border-x-transparent border-b-[4px] border-b-[#666]" /></div>
          <div className="h-[214px] bg-white border border-[#d6d6d6] mt-px" />
          <div className="flex-1" />
          <div className="h-[14px] bg-[#f4f4f4] border border-[#cfcfcf] flex items-center justify-center"><span className="w-0 h-0 border-x-[4px] border-x-transparent border-t-[4px] border-t-[#666]" /></div>
        </div>
      </div>
      {/* Sheet tabs */}
      <div className="flex items-stretch h-[24px] shrink-0 bg-[#e6e6e6] border-t border-[#bdbdbd] pr-[23px]">
        <Slot c="w-[58px]"><span className="w-0 h-0 border-y-[4px] border-y-transparent border-r-[4px] border-r-[#bbb]" /></Slot>
        <Slot c="w-[42px] pr-[14px]"><span className="w-0 h-0 border-y-[4px] border-y-transparent border-l-[4px] border-l-[#bbb]" /></Slot>
        <div className="w-[70px] bg-white border-b-2 border-[#0f6b42] flex items-center justify-center font-['Liberation_Sans'] text-[14px] text-[#1f7a4d]">Sheet1</div>
        <div className="w-[68px] flex items-center justify-center font-['Liberation_Sans'] text-[14px] text-[#555]">Sheet2</div>
        <div className="my-[3px] w-px bg-[#aaa]" />
        <div className="w-[68px] flex items-center justify-center font-['Liberation_Sans'] text-[14px] text-[#555]">Sheet3</div>
        <div className="my-[3px] w-px bg-[#aaa]" />
        <Slot c="w-[82px]">
          <svg width="16" height="16" viewBox="0 0 16 16" fill="none" stroke="#777"><circle cx="8" cy="8" r="7.300" /><path d="M8 4v8M4 8h8" strokeWidth="1.600" /></svg>
        </Slot>
        <div className="w-[310px]" />
        <div className="flex-1 flex items-center">
          <div className="w-[11px] h-[13px] bg-[#f4f4f4] border border-[#cfcfcf] flex items-center justify-center shrink-0"><span className="w-0 h-0 border-y-[4px] border-y-transparent border-r-[4px] border-r-[#666]" /></div>
          <div className="w-[100px] h-[13px] bg-white border border-[#d6d6d6]" />
          <div className="flex-1" />
          <div className="w-[14px] h-[13px] bg-[#f4f4f4] border border-[#cfcfcf] flex items-center justify-center shrink-0"><span className="w-0 h-0 border-y-[4px] border-y-transparent border-l-[4px] border-l-[#666]" /></div>
        </div>
      </div>
      {/* Status bar */}
      <div className="flex items-center flex-1 bg-[#f1f1f1] pl-[7px] text-[12px] text-[#666]">
        <span>就绪</span>
        <div className="flex-1" />
        <span className="text-[12px] font-['Liberation_Sans']">计数: 28</span>
        <Slot c="w-[38px] h-[25px] ml-[17px] bg-gradient-to-r from-[#cfcfcf] to-[#e4e4e4]">
          <svg width="14" height="13" viewBox="0 0 14 13" fill="none" stroke="#777"><path d="M.5 .5h13v12H.5zM.5 4.500h13M.5 8.500h13M5 .5v12M9.500 .5v12" /></svg>
        </Slot>
        <Slot c="w-[38px]">
          <svg width="14" height="13" viewBox="0 0 14 13" fill="none" stroke="#777"><path d="M.5 .5h13v12H.5z" /><path d="M3 3.500h8M3 6.500h8M3 9.500h8" /></svg>
        </Slot>
        <Slot c="w-[38px]">
          <svg width="14" height="13" viewBox="0 0 14 13" fill="none" stroke="#777"><path d="M.5 0v12.500h13V0M.5 7.500h6V0M7 7.500h6" /></svg>
        </Slot>
        <div className="w-[4px] h-[2px] bg-[#666] ml-[7px]" />
        <div className="w-[100px] ml-[6px] h-px bg-[#aaa] relative">
          <span className="absolute left-[48px] top-[-5px] w-[3px] h-[11px] bg-[#666]" />
        </div>
        <Slot c="w-[8px] ml-[4px] text-[14px] font-bold leading-[14px]">+</Slot>
        <span className="w-[36px] mr-[22px] ml-[11px] text-[13px] font-['Liberation_Sans'] text-right whitespace-nowrap">100%</span>
      </div>
      <Menu />
      <Mini />
      <div className="absolute left-[750px] top-[579px] z-30 flex items-center gap-[7px] text-white leading-[34px] whitespace-nowrap [-webkit-text-stroke:9px_#3a3a3a] [paint-order:stroke_fill]">
        <span className="text-[24px] font-light">酷课堂出品</span>
        <span className="text-[27px] font-['Inter'] font-light tracking-[-0.6px]">coolketang.com</span>
      </div>
    </div>
  );
}
